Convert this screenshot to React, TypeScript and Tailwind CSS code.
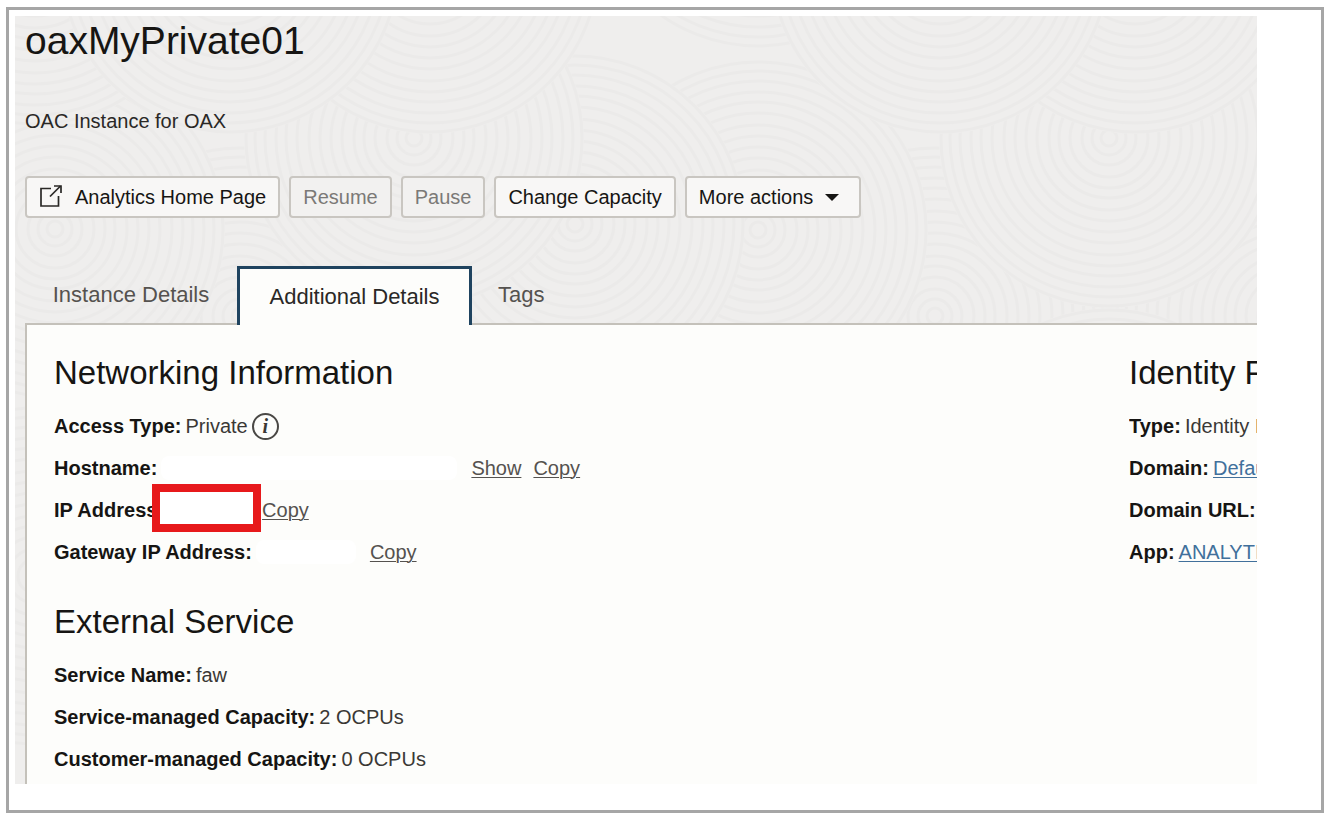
import React from 'react';

const rings = [8, 17, 27, 39, 50, 60, 72, 83, 94, 105, 117, 128, 138, 149, 159, 168];

// Back to front: later swirls cover the earlier ones
const swirls = [
  { x: 225, y: 300 },
  { x: 920, y: 300 },
  { x: 1270, y: 300 },
  { x: 1280, y: 40 },
  { x: 743, y: 214 },
  { x: 40, y: 213 },
  { x: 560, y: 208 },
  { x: 743, y: -138 },
  { x: 399, y: 122 },
  { x: 1094, y: 122 },
  { x: 20, y: -60 },
  { x: 415, y: -52 },
  { x: 215, y: -52 },
  { x: 1120, y: -52 },
  { x: 925, y: -52 },
  { x: 399, y: 462 },
  { x: 1094, y: 462 },
  { x: 20, y: 560 },
];

const Swirls: React.FC = () => (
  <svg className="absolute inset-0 h-full w-full" aria-hidden="true">
    {swirls.map((s, i) => (
      <g key={i}>
        <circle cx={s.x} cy={s.y} r={170} fill="#efeeed" />
        {rings.map((r) => (
          <circle key={r} cx={s.x} cy={s.y} r={r} fill="none" stroke="#ebeae9" strokeWidth={3} />
        ))}
      </g>
    ))}
  </svg>
);

const ActionButton: React.FC<{ disabled?: boolean; children: React.ReactNode }> = ({ disabled, children }) => (
  <button
    disabled={disabled}
    className="flex h-[42px] items-center whitespace-nowrap rounded-[4px] border-2 border-[#c9c6c1] bg-[#f8f7f6] px-3 text-[#161513] disabled:bg-[#f2f1f0] disabled:text-[#7b7977]"
  >
    {children}
  </button>
);

const Heading: React.FC<{ children: React.ReactNode }> = ({ children }) => (
  <h2 className="mb-3 text-[33px] leading-[40px] text-[#161513]">{children}</h2>
);

const Row: React.FC<{ label: string; children?: React.ReactNode }> = ({ label, children }) => (
  <div className="flex h-[42px] items-center whitespace-nowrap">
    <dt className="mr-1 font-bold text-[#161513]">{label}:</dt>
    <dd className="flex items-center">{children}</dd>
  </div>
);

const TextLink: React.FC<{ children: React.ReactNode }> = ({ children }) => (
  <a href="#" className="text-[#55524f] underline decoration-1 underline-offset-2">
    {children}
  </a>
);

const BlueLink: React.FC<{ children: React.ReactNode }> = ({ children }) => (
  <a href="#" className="text-[#41709b] underline decoration-1 underline-offset-2">
    {children}
  </a>
);

const App: React.FC = () => {
  return (
    <div className="bg-white pb-1 pl-[6px] pr-[3px] pt-[7px] font-['Liberation_Sans',Arial,sans-serif] text-[20px] leading-6 text-[#3a3835]">
      <div className="border-[3px] border-[#a6a6a6] pb-[26px] pl-[6px] pr-[64px] pt-[6px]">
        <main className="relative overflow-hidden bg-[#efeeed]">
          <Swirls />

          <div className="relative pl-[10px]">
            <h1 className="text-[39px] leading-[50px] text-[#161513]">oaxMyPrivate01</h1>
            <p className="mt-[43px] text-[#2a2826]">OAC Instance for OAX</p>

            {/* Actions */}
            <div className="mt-[43px] flex gap-[9px]">
              <ActionButton>
                <svg className="mr-3 h-[24px] w-[24px]" viewBox="0 0 24 24" fill="none" stroke="#2a2826" strokeWidth="1.7">
                  <path d="M12 3.500H2v17.500h17.500V11" />
                  <path d="M11 11.500 21.500 1" />
                  <path d="M15 1h7v7" />
                </svg>
                Analytics Home Page
              </ActionButton>
              <ActionButton disabled>Resume</ActionButton>
              <ActionButton disabled>Pause</ActionButton>
              <ActionButton>Change Capacity</ActionButton>
              <ActionButton>
                More actions
                <svg className="ml-3 mr-2 h-[7px] w-[14px]" viewBox="0 0 14 7" fill="#161513">
                  <path d="M0 0h14L7 7z" />
                </svg>
              </ActionButton>
            </div>

            {/* Tabs */}
            <div role="tablist" className="relative mt-[48px] flex h-[59px] text-[22px]">
              <button role="tab" className="w-[212px] pb-[2px] text-[#55524f]">
                Instance Details
              </button>
              <button
                role="tab"
                aria-selected="true"
                className="z-10 w-[235px] border-x-[3px] border-t-[3px] border-[#1f435f] bg-[#fdfdfb] text-[#2a2826]"
              >
                Additional Details
              </button>
              <button role="tab" className="pb-[2px] pl-[26px] text-[#55524f]">
                Tags
              </button>
            </div>

            {/* Tab content */}
            <div className="-mt-[2px] flex border-l-2 border-t-2 border-[#c4c1ba] bg-[#fdfdfb] pb-1 pl-[27px] pt-[28px]">
              <div className="flex-1">
                <section>
                  <Heading>Networking Information</Heading>
                  <dl>
                    <Row label="Access Type">
                      Private
                      <button
                        aria-label="About the access type"
                        className="ml-1 flex h-[27px] w-[27px] items-center justify-center rounded-full border-2 border-[#4a4845] font-['Liberation_Serif',serif] font-bold italic"
                      >
                        i
                      </button>
                    </Row>
                    <Row label="Hostname">
                      <span className="mr-[14px] h-6 w-[296px] rounded-lg bg-white" />
                      <span className="flex gap-3">
                        <TextLink>Show</TextLink>
                        <TextLink>Copy</TextLink>
                      </span>
                    </Row>
                    <Row label="IP Address">
                      <span className="relative h-6 w-[94px]">
                        <span className="absolute -left-4 -top-[14px] h-[48px] w-[109px] border-8 border-[#e7191b] bg-white" />
                      </span>
                      <TextLink>Copy</TextLink>
                    </Row>
                    <Row label="Gateway IP Address">
                      <span className="mr-[14px] h-6 w-[100px] rounded-lg bg-white" />
                      <TextLink>Copy</TextLink>
                    </Row>
                  </dl>
                </section>

                <section className="mt-[29px]">
                  <Heading>External Service</Heading>
                  <dl>
                    <Row label="Service Name">faw</Row>
                    <Row label="Service-managed Capacity">2 OCPUs</Row>
                    <Row label="Customer-managed Capacity">0 OCPUs</Row>
                  </dl>
                </section>
              </div>

              <section className="w-[128px] overflow-hidden whitespace-nowrap">
                <Heading>Identity Provider</Heading>
                <dl>
                  <Row label="Type">Identity Domain</Row>
                  <Row label="Domain">
                    <BlueLink>Default</BlueLink>
                  </Row>
                  <Row label="Domain URL" />
                  <Row label="App">
                    <BlueLink>ANALYTICSINST</BlueLink>
                  </Row>
                </dl>
              </section>
            </div>
          </div>
        </main>
      </div>
    </div>
  );
};

export default App;
